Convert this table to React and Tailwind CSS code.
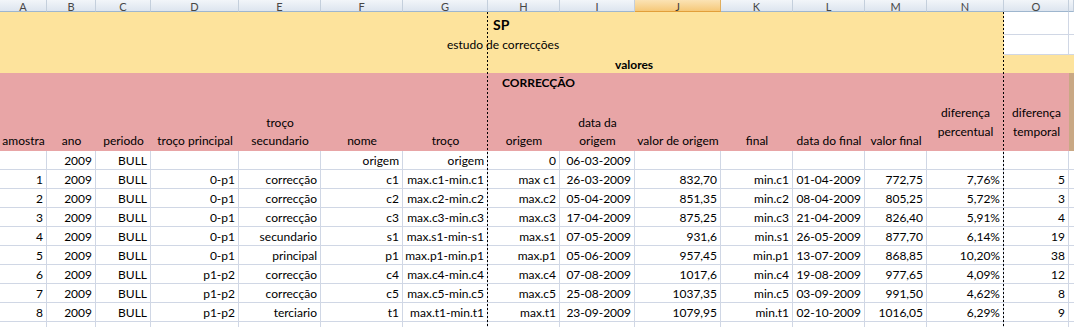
import React from 'react'

// letras das colunas A..P
const cols = ['A', 'B', 'C', 'D', 'E', 'F', 'G', 'H', 'I', 'J', 'K', 'L', 'M', 'N', 'O', '']

const headers = [
  ['amostra'],
  ['ano'],
  ['periodo'],
  ['troço principal'],
  ['troço', 'secundario'],
  ['nome'],
  ['troço'],
  ['origem'],
  ['data da', 'origem'],
  ['valor de origem'],
  ['final'],
  ['data do final'],
  ['valor final'],
]

const rows = [
  ['', '2009', 'BULL', '', '', 'origem', 'origem', '0', '06-03-2009', '', '', '', '', '', ''],
  ['1', '2009', 'BULL', '0-p1', 'correcção', 'c1', 'max.c1-min.c1', 'max c1', '26-03-2009', '832,70', 'min.c1', '01-04-2009', '772,75', '7,76%', '5'],
  ['2', '2009', 'BULL', '0-p1', 'correcção', 'c2', 'max.c2-min.c2', 'max.c2', '05-04-2009', '851,35', 'min.c2', '08-04-2009', '805,25', '5,72%', '3'],
  ['3', '2009', 'BULL', '0-p1', 'correcção', 'c3', 'max.c3-min.c3', 'max.c3', '17-04-2009', '875,25', 'min.c3', '21-04-2009', '826,40', '5,91%', '4'],
  ['4', '2009', 'BULL', '0-p1', 'secundario', 's1', 'max.s1-min-s1', 'max.s1', '07-05-2009', '931,6', 'min.s1', '26-05-2009', '877,70', '6,14%', '19'],
  ['5', '2009', 'BULL', '0-p1', 'principal', 'p1', 'max.p1-min.p1', 'max.p1', '05-06-2009', '957,45', 'min.p1', '13-07-2009', '868,85', '10,20%', '38'],
  ['6', '2009', 'BULL', 'p1-p2', 'correcção', 'c4', 'max.c4-min.c4', 'max.c4', '07-08-2009', '1017,6', 'min.c4', '19-08-2009', '977,65', '4,09%', '12'],
  ['7', '2009', 'BULL', 'p1-p2', 'correcção', 'c5', 'max.c5-min.c5', 'max.c5', '25-08-2009', '1037,35', 'min.c5', '03-09-2009', '991,50', '4,62%', '8'],
  ['8', '2009', 'BULL', 'p1-p2', 'terciario', 't1', 'max.t1-min.t1', 'max.t1', '23-09-2009', '1079,95', 'min.t1', '02-10-2009', '1016,05', '6,29%', '9'],
  ['', '', '', '', '', '', '', '', '', '', '', '', '', '', ''],
]

const grid =
  'grid grid-cols-[47px_49px_55px_88px_82px_82px_85px_72px_75px_86px_72px_72px_62px_77px_65px_1fr]'

function ColumnHeader() {
  return (
    <div className={`${grid} h-[12px] overflow-hidden`}>
      {cols.map((c, i) => (
        <div
          key={i}
          className={
            'flex items-end justify-center border-r border-b text-[11px] leading-[11px] ' +
            (c === 'J'
              ? 'bg-gradient-to-b from-[#fbe3b4] to-[#f5c878] border-r-[#e0ad5c] border-b-[#e29f3a] text-[#3c3c3c]'
              : 'bg-gradient-to-b from-[#f2f5f9] to-[#dde5ef] border-r-[#c4cfdc] border-b-[#9eb6ce] text-[#464646]')
          }
        >
          <span className="-mb-[1px]">{c}</span>
        </div>
      ))}
    </div>
  )
}

export default function App() {
  return (
    <div className="relative w-[1074px] h-[327px] overflow-hidden bg-white font-['Lato','Liberation_Sans',sans-serif] text-[12px] text-black">
      <ColumnHeader />

      {/* linha 1 - SP */}
      <div className={`${grid} h-[23px]`}>
        <div className="col-span-14 bg-[#fde39c] pl-[493px] pt-[5px] text-[14px] font-bold leading-[16px]">SP</div>
        <div className="border-b border-r border-[#d0d7e5]" />
        <div className="border-b border-[#d0d7e5]" />
      </div>

      {/* linha 2 */}
      <div className={`${grid} h-[19px]`}>
        <div className="col-span-14 bg-[#fde39c] pl-[447px] leading-[20px]">estudo de correcções</div>
        <div className="border-b border-r border-[#d0d7e5]" />
        <div className="border-b border-[#d0d7e5]" />
      </div>

      {/* linha 3 */}
      <div className="h-[19px] bg-[#fde39c] pl-[615px] font-bold leading-[21px]">valores</div>

      {/* linha 4 */}
      <div className={`${grid} h-[20px]`}>
        <div className="col-span-15 bg-[#e8a5a6] pl-[502px] font-bold leading-[20px]">CORRECÇÃO</div>
        <div className="bg-[#c9a884]" />
      </div>

      {/* linha 5 - cabeçalhos */}
      <div className={`${grid} h-[58px]`}>
        {headers.map((h, i) => (
          <div
            key={i}
            className="flex flex-col items-center justify-end whitespace-nowrap bg-[#e8a5a6] pb-[1px] leading-[18px]"
          >
            {h.map((t) => (
              <span key={t}>{t}</span>
            ))}
          </div>
        ))}
        <div className="flex flex-col items-center justify-center bg-[#e8a5a6] leading-[19px]">
          <span>diferença</span>
          <span>percentual</span>
        </div>
        <div className="flex flex-col items-center justify-center bg-[#e8a5a6] leading-[19px]">
          <span>diferença</span>
          <span>temporal</span>
        </div>
        <div className="bg-[#c9a884]" />
      </div>

      {/* dados */}
      {rows.map((r, ri) => (
        <div key={ri} className={`${grid} h-[19px]`}>
          {r.map((v, ci) => (
            <div
              key={ci}
              className="flex items-end justify-end whitespace-nowrap border-b border-r border-[#d0d7e5] pr-[3px] leading-[17px]"
            >
              {v}
            </div>
          ))}
          <div className="border-b border-[#d0d7e5]" />
        </div>
      ))}

      {/* quebras de página */}
      <div className="absolute left-[487px] top-[12px] bottom-0 w-px bg-[repeating-linear-gradient(to_bottom,#000_0_2px,transparent_2px_4px)]" />
      <div className="absolute left-[1003px] top-[12px] bottom-0 w-px bg-[repeating-linear-gradient(to_bottom,#000_0_2px,transparent_2px_4px)]" />
    </div>
  )
}
